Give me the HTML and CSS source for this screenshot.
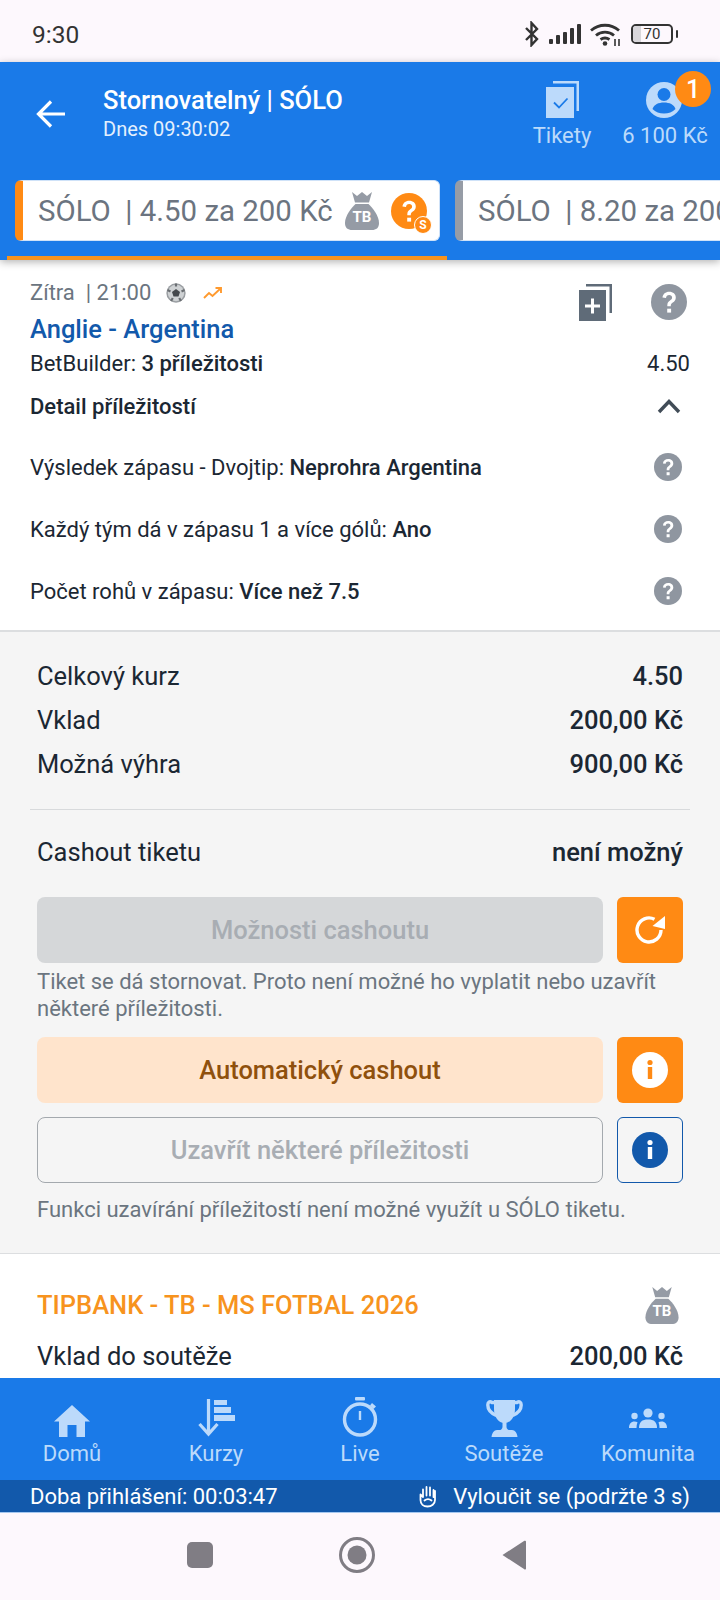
FILE: index.html
```html
<!DOCTYPE html>
<html lang="cs">
<head>
<meta charset="utf-8">
<title>Tiket</title>
<link rel="stylesheet" href="styles.css">
</head>
<body>
<svg class="sprite" width="0" height="0">
  <defs>
    <symbol id="q" viewBox="0 0 36 36"><circle cx="18" cy="18" r="18"/><path d="M11.500 13.600c.3-3.600 3-5.800 6.700-5.800 3.900 0 6.600 2.300 6.600 5.600 0 2.500-1.300 3.900-3 5.100-1.500 1-2 1.700-2 3.200v.6h-3.500v-.9c0-2.300.8-3.500 2.700-4.800 1.300-.9 2.100-1.700 2.100-3 0-1.500-1.100-2.600-2.900-2.600-1.900 0-3 1.100-3.200 2.900z" fill="#fff"/><rect x="16.200" y="24.700" width="3.900" height="3.900" fill="#fff"/></symbol>
    <symbol id="bag" viewBox="0 0 34 38"><path d="M7 0l5 4 5-4 5 4 5-4-3 10.500H10z" fill="currentColor"/><path d="M10.500 12h13C28 16 34 24 34 31c0 5-3 7-7 7H7c-4 0-7-2-7-7 0-7 6-15 10.500-19z" fill="currentColor"/></symbol>
  </defs>
</svg>
<div class="phone">
  <div class="status">
    <span class="time">9:30</span>
    <div class="status-icons">
      <svg width="16" height="26" viewBox="0 0 16 26"><path d="M2 7l11 11-5.500 6V2L13 8 2 19" fill="none" stroke="#333" stroke-width="2.400"/></svg>
      <svg class="signal" width="32" height="20" viewBox="0 0 32 20"><g fill="#333"><rect x="0" y="15" width="4" height="5" rx="1"/><rect x="7" y="11" width="4" height="9" rx="1"/><rect x="14" y="8" width="4" height="12" rx="1"/><rect x="21" y="4" width="4" height="16" rx="1"/><rect x="28" y="0" width="4" height="20" rx="1"/></g></svg>
      <svg class="wifi" width="31" height="23" viewBox="0 0 31 23"><g fill="none" stroke="#333" stroke-width="2.800"><path d="M1 7.500C9 .5 21 .5 29 7.500"/><path d="M6 12.500c5-4.500 13-4.500 18 0"/><path d="M10.500 16.500c3-2 6-2 9 0"/></g><circle cx="15" cy="20.500" r="2.300" fill="#333"/><path d="M25 16v7M29 16v7" stroke="#333" stroke-width="1.600"/></svg>
      <div class="battery"><span class="battery-fill"></span><span class="battery-num">70</span></div>
      <span class="battery-tip"></span>
    </div>
  </div>

  <header class="header">
    <div class="top">
      <svg class="back" width="30" height="28" viewBox="0 0 30 28"><path d="M29 14H3M15 1.500L2.500 14 15 26.500" fill="none" stroke="#fff" stroke-width="3.200"/></svg>
      <div class="titles">
        <div class="title">Stornovatelný | SÓLO</div>
        <div class="subtitle">Dnes 09:30:02</div>
      </div>
      <div class="action act-tickets">
        <svg width="33" height="37" viewBox="0 0 33 37"><path d="M7 0h26v30h-2.500V2.500H7z" fill="#bcdafb"/><rect x="0" y="6" width="28" height="31" fill="#bcdafb"/><path d="M8 21.500l5 5 8.500-9" fill="none" stroke="#1a7ae8" stroke-width="1.800"/></svg>
        <span class="action-label">Tikety</span>
      </div>
      <div class="action act-account">
        <div class="account-icon">
          <svg width="36" height="36" viewBox="0 0 36 36"><circle cx="18" cy="18" r="18" fill="#bcdafb"/><circle cx="18" cy="12.500" r="6.500" fill="#1a7ae8"/><path d="M6.500 27c1.500-4.500 6-6.500 11.500-6.500S28 22.500 29.500 27C26.500 30 22.500 31.500 18 31.500S9.500 30 6.500 27z" fill="#1a7ae8"/></svg>
          <span class="badge">1</span>
        </div>
        <span class="action-label">6 100 Kč</span>
      </div>
    </div>
    <div class="tabs">
      <div class="tab-slot active">
        <div class="tab tab-orange">
          <span class="tab-text">SÓLO&nbsp; | 4.50 za 200 Kč</span>
          <span class="tab-bag"><svg width="34" height="38"><use href="#bag"/></svg><b>TB</b></span>
          <span class="tab-q"><svg width="36" height="36" fill="#ff8a14"><use href="#q"/></svg><i>S</i></span>
        </div>
      </div>
      <div class="tab-slot">
        <div class="tab tab-gray">
          <span class="tab-text">SÓLO&nbsp; | 8.20 za 200 Kč</span>
        </div>
      </div>
    </div>
  </header>

  <main class="scroll">
    <section class="match">
      <div class="match-head">
        <div class="match-meta">
          <span>Zítra&nbsp; | 21:00</span>
          <svg class="ball" width="20" height="20" viewBox="0 0 20 20"><circle cx="10" cy="10" r="9.700" fill="#9a9ea2"/><circle cx="10" cy="10" r="8.200" fill="#cfd2d4"/><path d="M10 6l4 3-1.500 4.500h-5L6 9z" fill="#44484c"/><path d="M10 .5v3M1.500 7l3 1.500M18.500 7l-3 1.500M5 18l1.800-3M15 18l-1.800-3" stroke="#6a6e72" stroke-width="2.200"/></svg>
          <svg class="trend" width="19" height="12" viewBox="0 0 19 12"><path d="M1 11l5-5 3.500 3L17.500 1.500M12.500 1h5.500v5" fill="none" stroke="#ff9a2e" stroke-width="1.900"/></svg>
        </div>
        <div class="match-tools">
          <svg width="33" height="37" viewBox="0 0 33 37"><path d="M7 0h26v29h-2.500V2.500H7z" fill="#5f6b78"/><rect x="0" y="6" width="27" height="31" fill="#5f6b78"/><path d="M13.500 14.500v15M6 22h15" stroke="#fff" stroke-width="3"/></svg>
          <svg width="36" height="36" fill="#8f96a0"><use href="#q"/></svg>
        </div>
      </div>
      <h2 class="match-name">Anglie - Argentina</h2>
      <div class="bet-row"><span>BetBuilder: <strong>3 příležitosti</strong></span><span>4.50</span></div>
      <div class="detail-head"><strong>Detail příležitostí</strong><svg width="24" height="16" viewBox="0 0 24 16"><path d="M2 14L12 3.500 22 14" fill="none" stroke="#414c57" stroke-width="3.400"/></svg></div>
      <div class="selection"><span>Výsledek zápasu - Dvojtip: <strong>Neprohra Argentina</strong></span><svg width="28" height="28" fill="#8f96a0"><use href="#q"/></svg></div>
      <div class="selection"><span>Každý tým dá v zápasu 1 a více gólů: <strong>Ano</strong></span><svg width="28" height="28" fill="#8f96a0"><use href="#q"/></svg></div>
      <div class="selection"><span>Počet rohů v zápasu: <strong>Více než 7.5</strong></span><svg width="28" height="28" fill="#8f96a0"><use href="#q"/></svg></div>
    </section>

    <section class="summary">
      <div class="sum-row"><span>Celkový kurz</span><strong>4.50</strong></div>
      <div class="sum-row"><span>Vklad</span><strong>200,00 Kč</strong></div>
      <div class="sum-row"><span>Možná výhra</span><strong>900,00 Kč</strong></div>
      <div class="divider"></div>
      <div class="sum-row cash-row"><span>Cashout tiketu</span><strong>není možný</strong></div>
      <div class="btn-row">
        <div class="btn btn-disabled">Možnosti cashoutu</div>
        <div class="square square-orange">
          <svg width="32" height="30" viewBox="0 0 32 30"><path d="M27 15A12 12 0 1 1 20.500 4.300" fill="none" stroke="#fff" stroke-width="3.400"/><path d="M31 1v13l-12.500-3z" fill="#fff"/></svg>
        </div>
      </div>
      <p class="note note-two">Tiket se dá stornovat. Proto není možné ho vyplatit nebo uzavřít některé příležitosti.</p>
      <div class="btn-row">
        <div class="btn btn-peach">Automatický cashout</div>
        <div class="square square-orange">
          <svg width="36" height="36" viewBox="0 0 36 36"><circle cx="18" cy="18" r="18" fill="#fff"/><rect x="15.800" y="15" width="4.400" height="12" fill="#ff8a14"/><circle cx="18" cy="10.500" r="2.600" fill="#ff8a14"/></svg>
        </div>
      </div>
      <div class="btn-row row-close">
        <div class="btn btn-outline">Uzavřít některé příležitosti</div>
        <div class="square square-outline">
          <svg width="36" height="36" viewBox="0 0 36 36"><circle cx="18" cy="18" r="18" fill="#1259ab"/><rect x="15.800" y="15" width="4.400" height="12" fill="#fff"/><circle cx="18" cy="10.500" r="2.600" fill="#fff"/></svg>
        </div>
      </div>
      <p class="note note-last">Funkci uzavírání příležitostí není možné využít u SÓLO tiketu.</p>
    </section>

    <section class="tipbank">
      <div class="tip-head">
        <h3>TIPBANK - TB - MS FOTBAL 2026</h3>
        <span class="tip-bag"><svg width="34" height="37"><use href="#bag"/></svg><b>TB</b></span>
      </div>
      <div class="sum-row tip-row"><span>Vklad do soutěže</span><strong>200,00 Kč</strong></div>
    </section>
  </main>

  <nav class="nav">
    <div class="nav-item">
      <svg width="36" height="32" viewBox="0 0 36 32"><path d="M18 0L36 16.500h-5V32h-8.500V20h-9v12H5V16.500H0z" fill="#bcdafb"/></svg>
      <span>Domů</span>
    </div>
    <div class="nav-item">
      <svg width="37" height="38" viewBox="0 0 37 38"><path d="M10.500 0v35M1.500 25l9 10 9-10" fill="none" stroke="#bcdafb" stroke-width="3.200"/><path d="M16 1h13v5H16zM16 8h17v6H16zM16 16h21v6H16z" fill="#bcdafb"/></svg>
      <span>Kurzy</span>
    </div>
    <div class="nav-item">
      <svg width="36" height="40" viewBox="0 0 36 40"><rect x="13" y="0" width="10" height="3.500" rx="1" fill="#bcdafb"/><circle cx="18" cy="22.500" r="15.500" fill="none" stroke="#bcdafb" stroke-width="3.400"/><path d="M18 14v9" stroke="#bcdafb" stroke-width="2.400"/><path d="M30 6l4 3.500-2.500 2.500-3.500-3.500z" fill="#bcdafb"/></svg>
      <span>Live</span>
    </div>
    <div class="nav-item">
      <svg width="37" height="38" viewBox="0 0 37 38"><path d="M8 1h21v9c0 8-4.500 14-10.500 14S8 18 8 10z" fill="#bcdafb"/><path d="M10 3.500H6C3.500 1.800 1.800 3.500 1.800 6c0 5 4 8.500 8.500 10.500M27 3.500h4c2.500-1.700 4.200 0 4.200 2.500 0 5-4 8.500-8.500 10.500" fill="none" stroke="#bcdafb" stroke-width="3.400"/><path d="M16.500 22h4v6c0 2 2 3 4 4h-12c2-1 4-2 4-4z" fill="#bcdafb"/><path d="M11 31h15c3 0 5 3 5.500 7h-26c.5-4 2.500-7 5.500-7z" fill="#bcdafb"/></svg>
      <span>Soutěže</span>
    </div>
    <div class="nav-item">
      <svg class="nav-team" width="38" height="20" viewBox="0 0 38 20"><g fill="#bcdafb"><circle cx="19" cy="5" r="4.600"/><circle cx="5.500" cy="8" r="3.200"/><circle cx="32.500" cy="8" r="3.200"/><path d="M10 20c0-6 3-8.500 9-8.500s9 2.500 9 8.500z"/><path d="M0 20c0-4 2-6.500 5.500-6.500 1.200 0 2.200.3 3 .8C7.800 16 7.500 18 7.500 20zM38 20c0-4-2-6.500-5.500-6.500-1.200 0-2.200.3-3 .8 .7 1.700 1 3.700 1 5.700z"/></g></svg>
      <span>Komunita</span>
    </div>
  </nav>

  <div class="session">
    <span>Doba přihlášení: 00:03:47</span>
    <span class="exclude">
      <svg width="18" height="23" viewBox="0 0 18 23"><path d="M4 12V4.500M7.500 10.500V2M11 10.500V2.500M14.500 12V5M4 12L1.500 9.500M1.500 9.500V15c0 4 3 6.500 7 6.500s7.500-2.500 7.500-6.500V6M5.500 15.500c2-1.500 5-1.500 7 0" fill="none" stroke="#fff" stroke-width="1.800" stroke-linecap="round"/></svg>
      Vyloučit se (podržte 3 s)
    </span>
  </div>

  <div class="android">
    <span class="nav-square"></span>
    <svg width="36" height="36" viewBox="0 0 36 36"><circle cx="18" cy="18" r="16.500" fill="none" stroke="#807d84" stroke-width="3"/><circle cx="18" cy="18" r="9.500" fill="#807d84"/></svg>
    <svg width="26" height="30" viewBox="0 0 26 30"><path d="M25 1.500v27c0 1-1 1.500-2 .5L1.500 15 23 1c1-.5 2 0 2 .5z" fill="#807d84"/></svg>
  </div>
</div>
</body>
</html>
```

FILE: styles.css
```css
* { box-sizing: border-box; }
html, body { margin: 0; padding: 0; }
body { font-family: Roboto, "Liberation Sans", sans-serif; color: #1b2733; background: #fdf8fd; }
h2, h3, p { margin: 0; }
strong { font-weight: 500; }
svg { display: block; flex: none; }
.sprite { position: absolute; }
.phone { width: 720px; height: 1600px; display: flex; flex-direction: column; overflow: hidden; }

.status { height: 62px; flex: none; display: flex; justify-content: space-between; align-items: center; padding: 6px 42px 0 32px; background: #fdf8fd; color: #333; }
.time { font-size: 24.500px; }
.status-icons { display: flex; align-items: center; }
.signal { margin-left: 9px; }
.wifi { margin-left: 9px; }
.battery { position: relative; width: 42px; height: 20px; margin-left: 10px; border: 2px solid #333; border-radius: 5px; overflow: hidden; display: flex; align-items: center; justify-content: center; }
.battery-fill { position: absolute; left: 0; top: 0; bottom: 0; width: 8px; background: #d8d6da; }
.battery-num { position: relative; font-size: 15px; color: #333; line-height: 1; }
.battery-tip { width: 2px; height: 8px; margin-left: 3px; background: #333; border-radius: 1px; }

.header { flex: none; height: 198px; background: #1a7ae8; position: relative; z-index: 2; box-shadow: 0 2px 8px rgba(0,0,0,.3); display: flex; flex-direction: column; }
.top { height: 118px; display: flex; align-items: flex-start; flex: none; position: relative; padding-left: 36px; }
.back { margin-top: 38px; }
.titles { margin-left: 37px; margin-top: 23px; flex: 1; }
.title { font-size: 25.500px; font-weight: 500; color: #fff; line-height: 30px; }
.subtitle { font-size: 20px; color: #e4f0fd; line-height: 24px; margin-top: 2px; }
.action { display: flex; flex-direction: column; align-items: center; color: #bcdafb; }
.action-label { font-size: 22px; line-height: 26px; margin-top: 5px; white-space: nowrap; }
.act-tickets { width: 60px; margin-top: 19px; margin-right: 29px; }
.act-account { width: 88px; margin-top: 20px; margin-right: 11px; }
.account-icon { position: relative; width: 36px; height: 36px; margin-left: -2px; }
.badge { position: absolute; left: 29px; top: -11px; width: 36px; height: 36px; border-radius: 50%; background: #ff8a14; color: #fff; font-size: 25px; font-weight: 500; display: flex; align-items: center; justify-content: center; }

.tabs { height: 80px; display: flex; padding-left: 7px; overflow: hidden; align-items: flex-start; }
.tab-slot { width: 440px; height: 80px; flex: none; padding: 0 8px; border-bottom: 4px solid transparent; }
.tab-slot.active { border-bottom-color: #f7931e; }
.tab { height: 61px; background: #fff; border-radius: 6px; border: 1px solid #cfe2f8; display: flex; align-items: center; position: relative; padding-left: 15px; white-space: nowrap; overflow: visible; }
.tab-orange { width: 425px; border-left: 8px solid #ff8a14; }
.tab-gray { width: 300px; border-left: 8px solid #969ca6; }
.tab-text { font-size: 29.400px; color: #6b7480; width: 307px; flex: none; }
.tab-bag, .tip-bag { position: relative; display: block; color: #959ba5; }
.tab-bag b, .tip-bag b { position: absolute; left: 0; right: 0; bottom: 4px; text-align: center; color: #fff; font-size: 15px; font-weight: 700; line-height: 18px; }
.tab-q { position: relative; display: block; margin-left: 12px; }
.tab-q i { position: absolute; left: 23px; top: 23px; width: 18px; height: 18px; border-radius: 50%; background: #ff8a14; border: 1.500px solid #fff; color: #fff; font-style: normal; font-size: 12px; font-weight: 700; display: flex; align-items: center; justify-content: center; }

.scroll { flex: 1; min-height: 0; overflow: hidden; display: flex; flex-direction: column; background: #fff; }
.match { flex: none; height: 372px; padding: 15px 30px 0; background: #fff; border-bottom: 2px solid #dcdee0; position: relative; }
.match-head { display: flex; justify-content: space-between; height: 36px; }
.match-meta { display: flex; align-items: center; font-size: 22px; color: #6b7580; height: 36px; margin-top: -1px; }
.ball { margin-left: 15px; margin-top: 2px; }
.trend { margin-left: 17px; margin-top: 2px; }
.match-tools { display: flex; gap: 39px; margin-right: 3px; margin-top: 9px; position: relative; }
.match-name { font-size: 25.500px; font-weight: 500; color: #1259ab; line-height: 30px; margin-top: 3px; }
.bet-row { display: flex; justify-content: space-between; font-size: 22px; line-height: 28px; margin-top: 6px; }
.detail-head { display: flex; justify-content: space-between; align-items: center; height: 32px; margin-top: 12px; padding-right: 9px; font-size: 22px; }
.selection { display: flex; justify-content: space-between; align-items: center; height: 62px; font-size: 22px; padding-right: 8px; }
.detail-head + .selection { margin-top: 14px; }

.summary { flex: none; height: 622px; padding: 21.500px 37px 0; background: #f5f5f5; border-bottom: 1px solid #dcdee0; }
.sum-row { display: flex; justify-content: space-between; align-items: center; height: 44px; font-size: 25.500px; }
.sum-row strong { font-size: 25.500px; }
.divider { height: 1px; background: #d8dadc; margin: 23px -7px 20.500px; }
.cash-row { height: 44px; }
.btn-row { display: flex; gap: 14px; height: 66px; flex: none; }
.cash-row + .btn-row { margin-top: 23px; }
.btn { flex: 1; border-radius: 8px; display: flex; align-items: center; justify-content: center; font-size: 25.500px; font-weight: 500; }
.btn-disabled { background: #d5d7d9; color: #a8adb3; }
.btn-peach { background: #ffe4cc; color: #8f500d; }
.btn-outline { border: 1.500px solid #a4a9ae; color: #a8adb3; }
.square { width: 66px; flex: none; border-radius: 6px; display: flex; align-items: center; justify-content: center; }
.square-orange { background: #ff8a14; }
.square-outline { border: 1.500px solid #1259ab; }
.note { font-size: 22px; line-height: 27px; color: #6b7580; }
.note-two { margin: 5px 0 15px; }
.row-close { margin-top: 14px; }
.note-last { margin-top: 13px; }

.tipbank { flex: 1; padding: 31px 37px 0; background: #fff; }
.tip-head { display: flex; justify-content: space-between; align-items: center; height: 40px; }
.tip-head h3 { font-size: 25.500px; font-weight: 500; color: #f7931e; }
.tip-bag { margin-right: 4px; }
.tip-row { margin-top: 9px; }

.nav { flex: none; height: 102px; background: #1a7ae8; display: grid; grid-template-columns: repeat(5, 144px); color: #bcdafb; }
.nav-item { display: flex; flex-direction: column; align-items: center; justify-content: flex-end; padding-bottom: 13px; }
.nav-item span { font-size: 22px; line-height: 26px; margin-top: 4px; }
.nav-team { margin-bottom: 9px; }

.session { flex: none; height: 33px; background: #1259ab; color: #fff; font-size: 22px; display: flex; justify-content: space-between; align-items: center; padding: 0 30px; border-bottom: 1px solid #a5c8f0; }
.exclude { display: flex; align-items: center; gap: 16px; }

.android { flex: none; height: 87px; background: #fdf8fd; display: flex; align-items: center; padding-left: 187px; padding-bottom: 4px; }
.nav-square { width: 26px; height: 26px; border-radius: 5px; background: #807d84; }
.android svg:nth-child(2) { margin-left: 126px; }
.android svg:nth-child(3) { margin-left: 126px; }
```
